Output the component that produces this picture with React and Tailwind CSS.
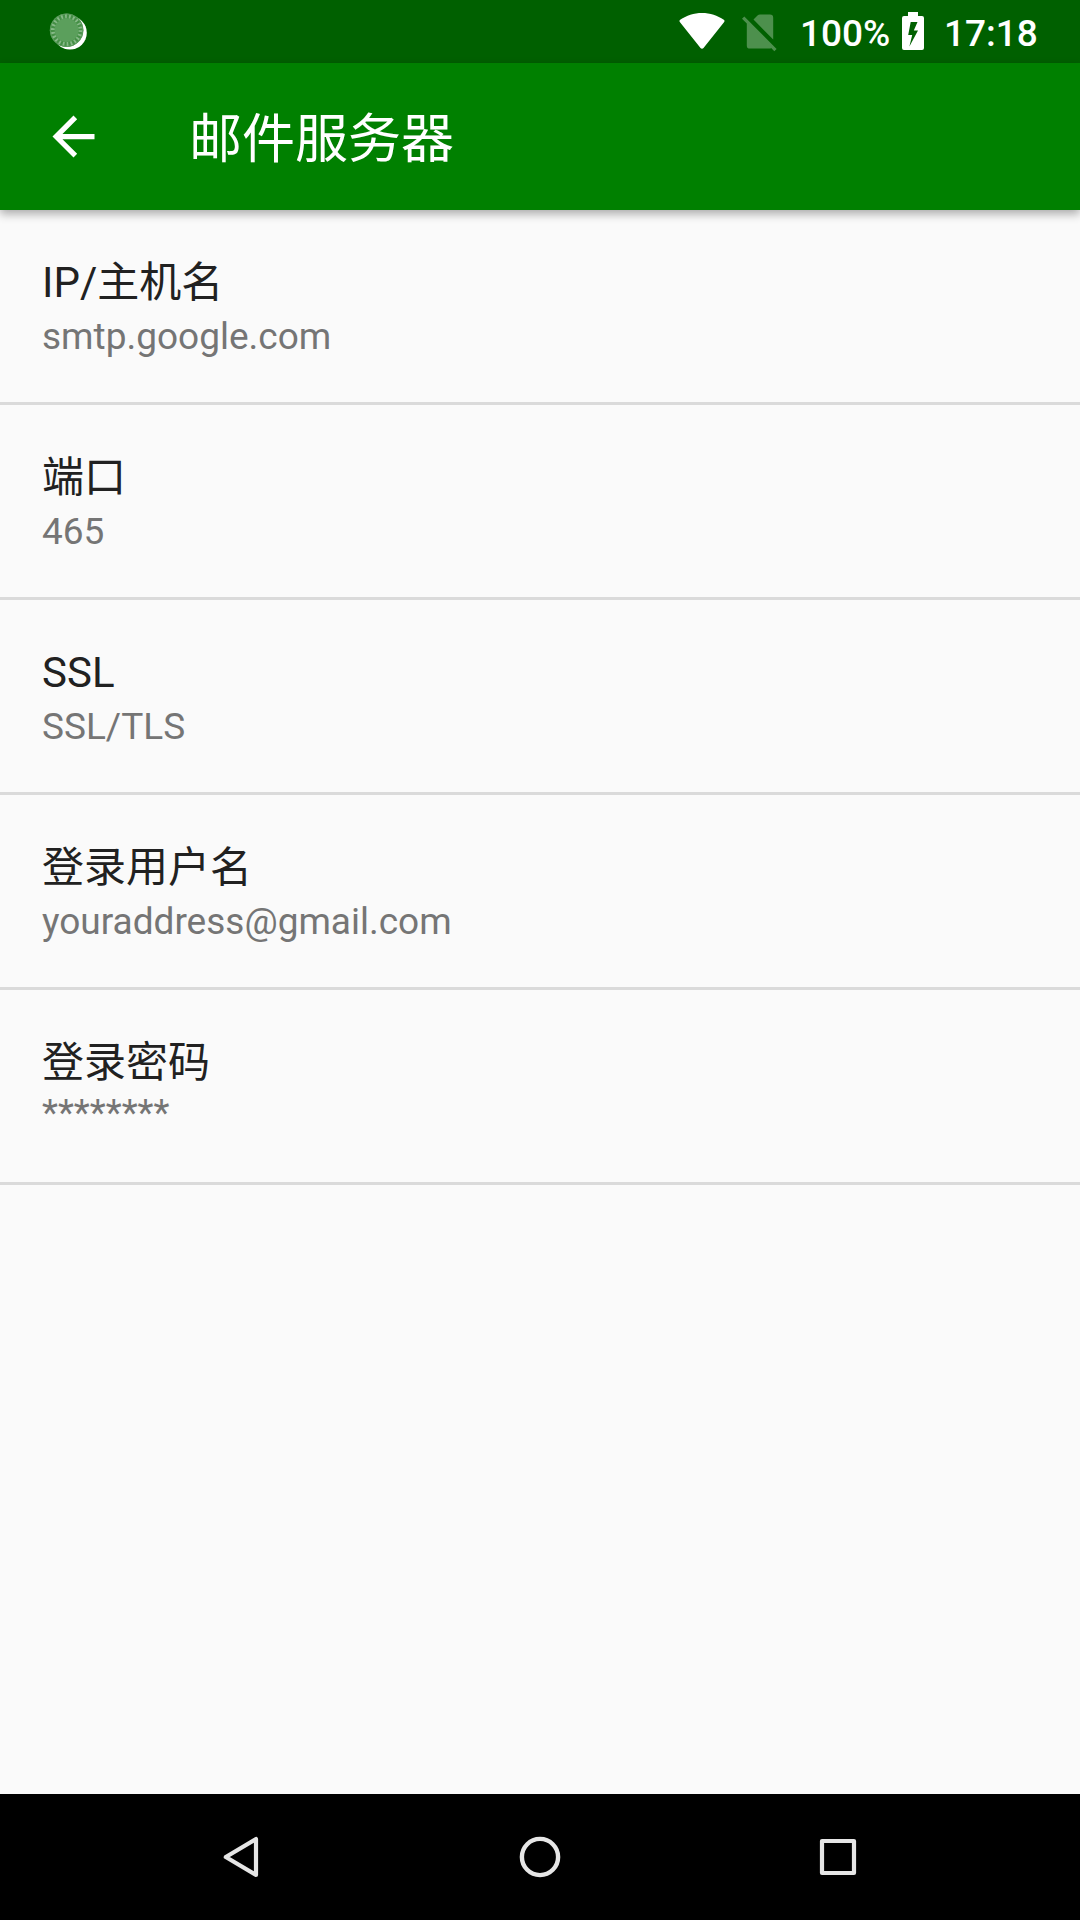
import React from "react";

const settings = [
  { title: "IP/主机名", value: "smtp.google.com" },
  { title: "端口", value: "465" },
  { title: "SSL", value: "SSL/TLS" },
  { title: "登录用户名", value: "youraddress@gmail.com" },
  { title: "登录密码", value: "********", masked: true },
];

const SyncIcon = () => (
  <svg className="h-[42px] w-[42px]" viewBox="0 0 42 42">
    <circle cx="22" cy="21.8" r="16.8" fill="#fff" />
    <circle cx="18.6" cy="19.2" r="16.8" fill="#458f46" />
    <circle cx="18.6" cy="19.2" r="14" fill="none" stroke="#86b987" strokeWidth="4.4" strokeDasharray="1.8 2.198" />
    <circle cx="18.6" cy="19.2" r="16.3" fill="none" stroke="#5b9c5c" strokeWidth="1" />
    <circle cx="18.6" cy="19.2" r="11.9" fill="#5b9f5c" />
  </svg>
);

const WifiIcon = () => (
  <svg className="h-9 w-[46px]" viewBox="0 0 46 36">
    <path
      d="M1 9.2C.2 8.4.3 7.3 1.2 6.7C7.5 2.5 14.8 0 23 0S38.5 2.5 44.8 6.7C45.7 7.3 45.8 8.4 45 9.2L24.5 35C23.7 36 22.3 36 21.5 35Z"
      fill="#fff"
    />
  </svg>
);

const NoSimIcon = () => (
  <svg className="h-[38px] w-9" viewBox="0 0 36 38" fill="#fff" opacity="0.3">
    <path d="M11.5 5.5L15.5 1.6Q16.5.6 18 .6H28Q31.2.6 31.2 3.8V25.6Z" />
    <path d="M0 4.8L2.3 2.5L34.6 34.9L32.3 37.2L29.2 34.1Q28.6 34.6 27.5 34.6H8Q4.8 34.6 4.8 31.4V9.6Z" />
  </svg>
);

const BatteryIcon = () => (
  <svg className="h-[38px] w-[22px]" viewBox="0 0 22 38">
    <path
      fillRule="evenodd"
      d="M6 0H16V4H20Q22 4 22 6V36Q22 38 20 38H2Q0 38 0 36V6Q0 4 2 4H6ZM8.7 10L6.2 23H10.2L7.4 34.5L16 18.5H11.8L15.5 10Z"
      fill="#fff"
    />
  </svg>
);

const StatusBar = () => (
  <div className="flex h-[63px] shrink-0 items-center bg-[#006000] pl-12 text-[37px] font-medium leading-none text-white">
    <SyncIcon />
    <div className="ml-[589px] mt-[-1px]">
      <WifiIcon />
    </div>
    <div className="ml-[17px] mt-[3px]">
      <NoSimIcon />
    </div>
    <span className="ml-[22px] w-[102px] whitespace-nowrap pt-[4px]">100%</span>
    <div className="mt-[-1px]">
      <BatteryIcon />
    </div>
    <span className="ml-5 whitespace-nowrap pt-[4px]">17:18</span>
  </div>
);

const AppBar = () => (
  <header className="relative flex h-[147px] shrink-0 items-center bg-[#008000] pl-[42px] text-white shadow-[0_4px_9px_rgba(0,0,0,0.32)]">
    <button>
      <svg className="block h-[63px] w-[63px]" viewBox="0 0 24 24" fill="#fff">
        <path d="M20 11H7.8l5.6-5.6L12 4l-8 8 8 8 1.4-1.4L7.8 13H20z" />
      </svg>
    </button>
    <h1 className="ml-[84px] pt-1.5 text-[53px] leading-[62px]">邮件服务器</h1>
  </header>
);

const NavBar = () => (
  <nav className="flex h-[126px] shrink-0 items-center justify-center bg-black">
    <button className="flex w-[298px] justify-center">
      <svg className="h-11 w-11" viewBox="0 0 44 44" fill="none" stroke="#e6e6e6" strokeWidth="4.2" strokeLinejoin="round">
        <path d="M5.8 22L36 4V40Z" />
      </svg>
    </button>
    <button className="flex w-[298px] justify-center">
      <svg className="h-11 w-11" viewBox="0 0 44 44" fill="none" stroke="#e6e6e6" strokeWidth="4.4">
        <circle cx="22" cy="22" r="18.1" />
      </svg>
    </button>
    <button className="flex w-[298px] justify-center">
      <svg className="h-11 w-11" viewBox="0 0 44 44" fill="none" stroke="#e6e6e6" strokeWidth="4.2" strokeLinejoin="round">
        <path d="M6 6H38V38H6Z" />
      </svg>
    </button>
  </nav>
);

const App = () => {
  return (
    <div className="flex h-[1920px] w-[1080px] flex-col overflow-hidden bg-[#fafafa] font-['Roboto','Noto_Sans_CJK_SC',sans-serif]">
      <StatusBar />
      <AppBar />
      <main className="flex-1">
        {settings.map((item) => (
          <div key={item.title} className="h-[195px] border-b-3 border-[#dadada] px-[42px] pt-12">
            <div className="text-[42px] leading-[50px] text-[#212121]">{item.title}</div>
            {/* masked values sit a little higher on the line */}
            <div
              className={
                item.masked
                  ? "mt-[3px] text-[37px] leading-11 text-[#757575]"
                  : "mt-[7px] text-[37px] leading-11 text-[#757575]"
              }
            >
              {item.value}
            </div>
          </div>
        ))}
      </main>
      <NavBar />
    </div>
  );
};

export default App;
